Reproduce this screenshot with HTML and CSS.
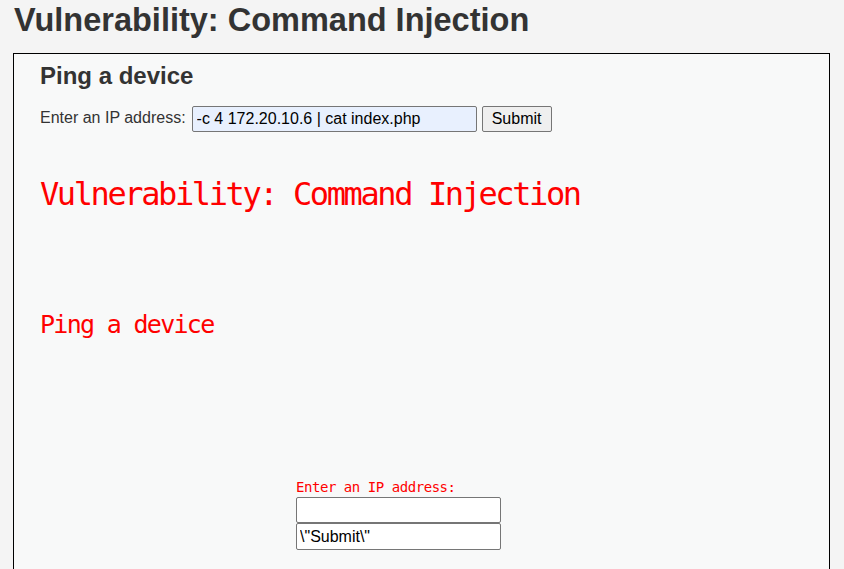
FILE: index.html
```html
<!DOCTYPE html>
<html>
<head>
<meta charset="utf-8">
<link rel="stylesheet" href="styles.css">
</head>
<body>
<h1 class="title">Vulnerability: Command Injection</h1>
<div class="box">
  <h2 class="sub">Ping a device</h2>
  <form class="row">
    <label class="lbl">Enter an IP address:</label>
    <input class="ip" type="text" value="-c 4 172.20.10.6 | cat index.php">
    <button class="btn" type="button">Submit</button>
  </form>
  <div class="out">
    <div class="r-title">Vulnerability: Command Injection</div>
    <div class="r-sub">Ping a device</div>
    <div class="r-form">
      <div class="r-lbl">Enter an IP address:</div>
      <input class="r-in" type="text" value="">
      <input class="r-in" type="text" value='\"Submit\"'>
    </div>
  </div>
</div>
</body>
</html>
```
FILE: styles.css
```css
html, body {
  margin: 0;
  padding: 0;
  background: #f4f4f4;
  font-family: "Liberation Sans", Arial, sans-serif;
  color: #333;
  overflow: hidden;
}
.title {
  margin: 0;
  padding: 2px 0 0 14px;
  font-size: 32.5px;
  font-weight: bold;
  line-height: 37px;
  color: #333;
}
.box {
  margin: 14px 0 0 13px;
  width: 817px;
  height: 520px;
  border: 1px solid #000;
  background: #f8f9f9;
  padding: 8px 0 0 26px;
  box-sizing: border-box;
}
.sub {
  margin: 0;
  font-size: 24px;
  font-weight: bold;
  line-height: 28px;
  color: #333;
}
.row {
  margin: 16px 0 0 0;
  display: flex;
  align-items: center;
  height: 26px;
}
.lbl {
  font-size: 16px;
  color: #333;
  margin-right: 6px;
  position: relative;
  top: -1px;
}
.ip {
  width: 285px;
  height: 26px;
  box-sizing: border-box;
  border: 1px solid #767676;
  border-radius: 2px;
  background: #e8f0fe;
  font-family: "Liberation Sans", Arial, sans-serif;
  font-size: 16px;
  color: #000;
  padding: 0 0 0 4px;
  margin: 0;
}
.btn {
  margin-left: 5px;
  width: 70px;
  height: 26px;
  box-sizing: border-box;
  border: 1px solid #767676;
  border-radius: 2px;
  background: #efefef;
  font-family: "Liberation Sans", Arial, sans-serif;
  font-size: 16px;
  color: #000;
  padding: 0;
}
.out {
  color: #f00;
  font-family: "DejaVu Sans Mono", monospace;
}
.r-title {
  margin-top: 44px;
  font-size: 32px;
  letter-spacing: -2.4px;
  line-height: 37px;
  white-space: nowrap;
}
.r-sub {
  margin-top: 97px;
  font-size: 25px;
  letter-spacing: -1.7px;
  line-height: 29px;
}
.r-form {
  margin: 140px 0 0 256px;
  display: flex;
  flex-direction: column;
  align-items: flex-start;
}
.r-lbl {
  font-size: 14px;
  letter-spacing: -0.45px;
  line-height: 17px;
  margin-bottom: 1px;
}
.r-in {
  width: 205px;
  height: 26px;
  box-sizing: border-box;
  border: 1px solid #767676;
  border-radius: 2px;
  background: #fff;
  font-family: "Liberation Sans", Arial, sans-serif;
  font-size: 16px;
  color: #000;
  padding: 0 0 0 3px;
  margin: 0;
}
.r-in + .r-in {
  margin-top: 0;
  height: 27px;
}
```
